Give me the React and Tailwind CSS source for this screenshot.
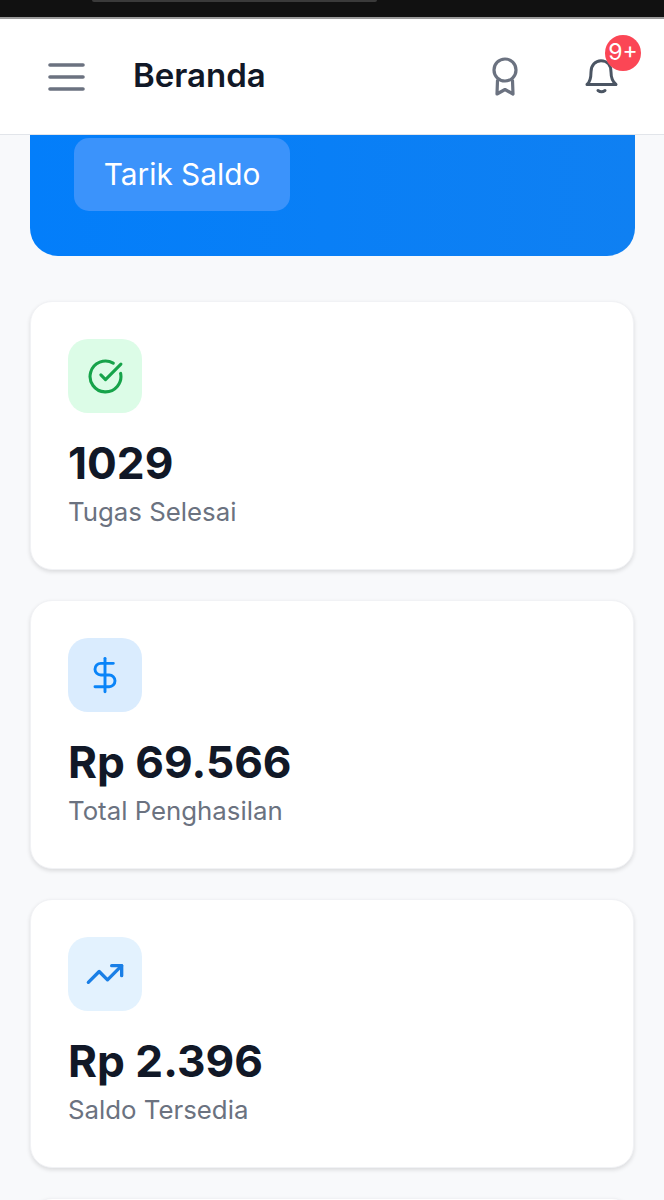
import React from 'react';
import { CircleCheckBig, DollarSign, TrendingUp } from 'lucide-react';

const stats = [
    { id: 'tasks', value: '1029', label: 'Tugas Selesai', iconBg: 'bg-[#dcfce7]', iconColor: 'text-[#16a34a]', iconSize: 37, iconStroke: 2, Icon: CircleCheckBig },
    { id: 'income', value: 'Rp 69.566', label: 'Total Penghasilan', iconBg: 'bg-[#daecfe]', iconColor: 'text-[#0a84f8]', iconSize: 40, iconStroke: 1.75, Icon: DollarSign },
    { id: 'balance', value: 'Rp 2.396', label: 'Saldo Tersedia', iconBg: 'bg-[#e3f2fe]', iconColor: 'text-[#1a7fe6]', iconSize: 40, iconStroke: 2, Icon: TrendingUp },
];

function MenuIcon() {
    return (
        <svg width="37" height="28" viewBox="0 0 37 28" fill="none" stroke="#6b7280" strokeWidth="3.6" strokeLinecap="round" className="shrink-0">
            <path d="M2 2 H35 M2 14 H35 M2 26 H35" />
        </svg>
    );
}

function AwardIcon() {
    return (
        <svg width="30" height="40" viewBox="0 0 30 40" fill="none" stroke="#6b7280" strokeWidth="3.2" strokeLinejoin="round" strokeLinecap="round">
            <circle cx="15" cy="13" r="11" />
            <path d="M7.5 23.5 L7 37 L15 32.5 L23 37 L22.5 23.5" />
        </svg>
    );
}

function BellIcon() {
    return (
        <svg width="34" height="36" viewBox="0 0 34 36" fill="none" stroke="#4b5563" strokeWidth="3" strokeLinejoin="round" strokeLinecap="round">
            <path d="M2 25.5 C5 23 6 20 6 13 C6 6 10.5 1.7 16 1.7 C22 1.7 26 6 26 13 C26 20 28 23 31 25.5 Z" />
            <path d="M13 31.5 C15 33 18 33 20 31.5" />
        </svg>
    );
}

function Header() {
    return (
        <header className="h-[116px] shrink-0 bg-white border-b border-[#e2e5ea] flex items-center pl-[48px] pr-[45px]">
            <MenuIcon />
            <h1 className="ml-[48px] -mt-[2px] text-[33px] font-semibold text-[#111827] leading-none flex-1">Beranda</h1>
            <div className="flex items-center gap-[65px]">
                <AwardIcon />
                <div className="relative flex">
                    <BellIcon />
                    <span className="absolute -top-[24px] left-[20px] w-[36px] h-[36px] rounded-full bg-[#fb4655] text-white text-[23px] flex items-center justify-center">
                        9+
                    </span>
                </div>
            </div>
        </header>
    );
}

function StatCard({ value, label, iconBg, iconColor, iconSize, iconStroke, Icon }) {
    return (
        <div className="h-[269px] shrink-0 bg-white rounded-[22px] border border-[#f1f2f5] shadow-[0_2px_4px_rgba(0,0,0,0.12)] pt-[37px] px-[37px]">
            <div className={`w-[74px] h-[74px] rounded-[20px] flex items-center justify-center ${iconBg}`}>
                <Icon size={iconSize} strokeWidth={iconStroke} className={iconColor} />
            </div>
            <div className="mt-[20px] text-[44.2px] leading-[60px] font-bold text-[#111827]">{value}</div>
            <div className="mt-[4px] text-[25.8px] leading-[30px] text-[#6b7280]">{label}</div>
        </div>
    );
}

export default function App() {
    return (
        <div className="w-[664px] h-[1200px] overflow-hidden flex flex-col bg-[#f8f9fb] font-['Inter',sans-serif]">
            <div className="h-[19px] shrink-0 bg-[#111111] border-b-2 border-[#9a9a9a] flex justify-center">
                <div className="w-[285px] h-[2px] -ml-[196px] bg-[#3a3a3a] rounded-b-full" />
            </div>
            <Header />
            <main className="flex-1 min-h-0 overflow-hidden px-[30px] flex flex-col">
                <div className="w-[605px] h-[121px] shrink-0 bg-gradient-to-r from-[#037efa] to-[#0f80f2] rounded-b-[28px] pt-[3px] pl-[44px]">
                    <button className="w-[216px] h-[73px] rounded-[15px] bg-[#3b93fb] text-white text-[29.8px]">
                        Tarik Saldo
                    </button>
                </div>
                <div className="mt-[45px] flex flex-col gap-[30px]">
                    {stats.map(({ id, ...stat }) => (
                        <StatCard key={id} {...stat} />
                    ))}
                    <StatCard value="" label="" iconBg="bg-white" iconColor="text-white" iconSize={40} iconStroke={2} Icon={TrendingUp} />
                </div>
            </main>
        </div>
    );
}
